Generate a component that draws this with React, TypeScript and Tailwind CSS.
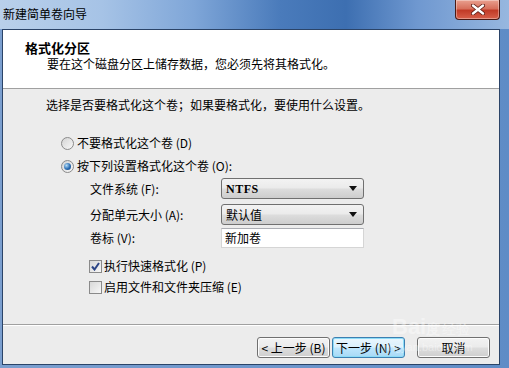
import React from "react";

const F = "font-['Noto_Sans_CJK_SC',sans-serif]";

function Radio({ checked }: { checked?: boolean }) {
  return (
    <span className="w-[13px] h-[13px] rounded-full border border-[#8a8a8a] bg-[linear-gradient(135deg,#d4d4d4,#f8f8f8)] flex items-center justify-center shrink-0">
      {checked && (
        <span className="w-[7px] h-[7px] rounded-full bg-[radial-gradient(circle_at_35%_35%,#b6ddf7,#2a6db3_55%,#143f78)]" />
      )}
    </span>
  );
}

function Check({ checked }: { checked?: boolean }) {
  return (
    <span className="w-[13px] h-[13px] border border-[#8a8a8a] bg-[linear-gradient(135deg,#d8d8d8,#f7f7f7)] flex items-center justify-center shrink-0">
      {checked && (
        <svg width="9" height="9" viewBox="0 0 9 9">
          <path d="M1 4.5 L3.5 7.5 L8 1" fill="none" stroke="#2c4586" strokeWidth="2" />
        </svg>
      )}
    </span>
  );
}

function Combo({ text, mono }: { text: string; mono?: boolean }) {
  return (
    <div className="w-[143px] h-[21px] border border-[#707070] rounded-[3px] bg-[linear-gradient(#f3f3f3,#ebebeb_45%,#dcdcdc_55%,#cdcdcd)] flex items-center justify-between pl-[4px] pr-[6px]">
      <span
        className={
          mono
            ? "font-['Liberation_Serif',serif] font-bold text-[12px] text-black leading-[16px] tracking-[0.5px]"
            : "text-[12px] text-black leading-[16px]"
        }
      >
        {text}
      </span>
      <svg width="8" height="5" viewBox="0 0 8 5">
        <path d="M0 0 H8 L4 5 Z" fill="#111" />
      </svg>
    </div>
  );
}

function Btn({ children, focused }: { children: React.ReactNode; focused?: boolean }) {
  return (
    <div
      className={
        "w-[73px] h-[21px] rounded-[3px] border flex items-center justify-center text-[12px] leading-[16px] text-black " +
        (focused
          ? "border-[#3c7fb1] bg-[linear-gradient(#eaf6fd,#d9f0fc_48%,#bee6fd_52%,#a7d9f5)] shadow-[inset_0_0_0_1px_#8ddcf7]"
          : "border-[#707070] bg-[linear-gradient(#f2f2f2,#ebebeb_48%,#dddddd_52%,#cfcfcf)] shadow-[inset_0_0_0_1px_#fcfcfc]")
      }
    >
      {children}
    </div>
  );
}

export default function App() {
  return (
    <div
      className={
        F +
        " relative w-[509px] h-[368px] overflow-hidden flex flex-col bg-[linear-gradient(90deg,#7b9fcf,#6f97cc_50%,#5f8cc6)]"
      }
    >
      {/* title bar */}
      <div className="h-[29px] shrink-0 flex items-center pl-[3px] bg-[linear-gradient(90deg,#b9d0ea,#a6c3e6_20%,#7fa6d8_38%,#4a7bbb_55%,#3d6fb1_68%,#6f98d0_82%,#97b7df)]">
        <span className="text-[12px] leading-[16px] text-black -mt-[2px]">新建简单卷向导</span>
      </div>

      {/* close button */}
      <div className="absolute left-[455px] top-0 w-[45px] h-[20px] rounded-b-[4px] border border-t-0 border-[#4a1a14] bg-[linear-gradient(#e9a08f,#d7705c_45%,#c13b27_55%,#d8604a)] flex items-center justify-center shadow-[inset_0_0_0_1px_rgba(255,255,255,0.35)]">
        <svg width="14" height="11" viewBox="0 0 14 11">
          <path d="M2 1.5 L12 9.5 M12 1.5 L2 9.5" stroke="#5a1a12" strokeWidth="4" strokeLinecap="round" />
          <path d="M2 1.5 L12 9.5 M12 1.5 L2 9.5" stroke="#ffffff" strokeWidth="2.4" strokeLinecap="round" />
        </svg>
      </div>

      {/* content */}
      <div className="ml-[2px] mr-[9px] h-[336px] border border-[#2b4468] flex flex-col bg-[#ececec]">
        {/* header */}
        <div className="h-[59px] shrink-0 bg-white border-b border-[#a0a0a0] pt-[10px]">
          <div className="pl-[22px] text-[13px] font-bold leading-[16px] text-black">格式化分区</div>
          <div className="pl-[44px] text-[12px] leading-[16px] text-black">
            要在这个磁盘分区上储存数据，您必须先将其格式化。
          </div>
        </div>

        {/* body */}
        <div className="h-[236px] shrink-0 border-b border-[#a0a0a0] text-[12px] leading-[16px] text-black">
          <div className="pl-[43px] mt-[8px]">选择是否要格式化这个卷；如果要格式化，要使用什么设置。</div>

          <div className="pl-[58px] mt-[22px] flex items-center gap-[3px] h-[16px]">
            <Radio />
            <span>不要格式化这个卷 (D)</span>
          </div>
          <div className="pl-[58px] mt-[7px] flex items-center gap-[3px] h-[16px]">
            <Radio checked />
            <span>按下列设置格式化这个卷 (O):</span>
          </div>

          <div className="pl-[87px] mt-[4px] flex items-center">
            <span className="w-[131px]">文件系统 (F):</span>
            <Combo text="NTFS" mono />
          </div>
          <div className="pl-[87px] mt-[5px] flex items-center">
            <span className="w-[131px]">分配单元大小 (A):</span>
            <Combo text="默认值" />
          </div>
          <div className="pl-[87px] mt-[3px] flex items-center">
            <span className="w-[131px]">卷标 (V):</span>
            <div className="w-[143px] h-[20px] bg-white border border-[#d5d5d5] border-t-[#abadb3] flex items-center pl-[3px]">
              新加卷
            </div>
          </div>

          <div className="pl-[86px] mt-[10px] flex items-center gap-[2px] h-[16px]">
            <Check checked />
            <span>执行快速格式化 (P)</span>
          </div>
          <div className="pl-[86px] mt-[5px] flex items-center gap-[2px] h-[16px]">
            <Check />
            <span>启用文件和文件夹压缩 (E)</span>
          </div>
        </div>

        {/* footer */}
        <div className="flex-1 border-t border-white pt-[11px] pr-[9px] flex justify-end items-start">
          <div className="flex gap-[2px]">
            <Btn>&lt; 上一步 (B)</Btn>
            <Btn focused>下一步 (N) &gt;</Btn>
          </div>
          <div className="ml-[12px]">
            <Btn>取消</Btn>
          </div>
        </div>
      </div>

      {/* watermark */}
      <div className="absolute left-[392px] top-[316px] text-white opacity-40 pointer-events-none leading-none">
        <div className="text-[22px] font-bold font-['Liberation_Sans',sans-serif]">Bai<span className="text-[14px]">度</span><span className="text-[14px] font-normal ml-[2px]">经验</span></div>
        <div className="text-[11px] font-['Liberation_Sans',sans-serif] mt-[4px] ml-[-8px]">jingyan.baidu.com</div>
      </div>
    </div>
  );
}
